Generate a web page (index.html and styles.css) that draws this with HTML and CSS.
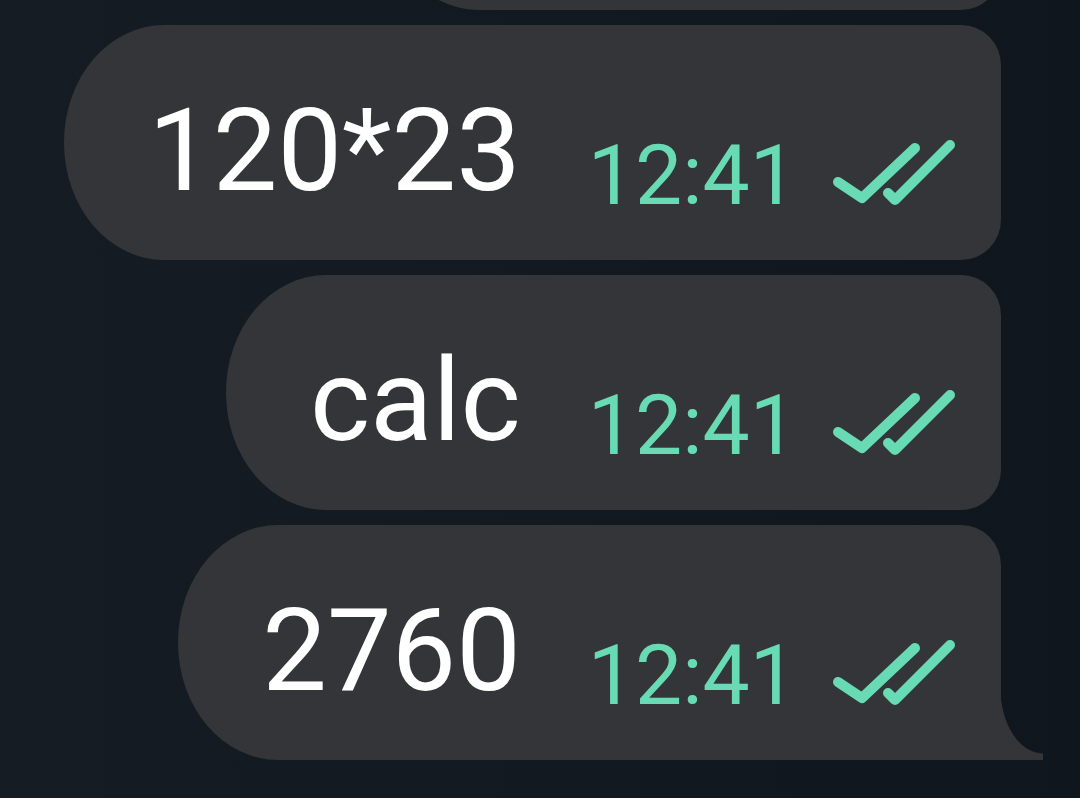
FILE: index.html
```html
<!DOCTYPE html>
<html lang="en">
<head>
<meta charset="utf-8">
<title>Chat</title>
<link rel="stylesheet" href="styles.css">
</head>
<body>
<div class="chat">
  <div class="bubble bubble--clipped"></div>

  <div class="bubble">
    <span class="msg">120*23</span>
    <span class="meta">
      <span class="time">12:41</span>
      <svg class="checks" viewBox="0 0 132 70" aria-hidden="true">
        <polyline points="13,45 37,61 90,11"/>
        <polyline points="63,56 70,63 125,8"/>
      </svg>
    </span>
  </div>

  <div class="bubble">
    <span class="msg">calc</span>
    <span class="meta">
      <span class="time">12:41</span>
      <svg class="checks" viewBox="0 0 132 70" aria-hidden="true">
        <polyline points="13,45 37,61 90,11"/>
        <polyline points="63,56 70,63 125,8"/>
      </svg>
    </span>
  </div>

  <div class="bubble bubble--tail">
    <span class="msg">2760</span>
    <span class="meta">
      <span class="time">12:41</span>
      <svg class="checks" viewBox="0 0 132 70" aria-hidden="true">
        <polyline points="13,45 37,61 90,11"/>
        <polyline points="63,56 70,63 125,8"/>
      </svg>
    </span>
  </div>
</div>
</body>
</html>
```

FILE: styles.css
```css
html, body {
  margin: 0;
  height: 100%;
}

body {
  background: linear-gradient(to right, #151c24 0%, #121920 50%, #0f161d 100%);
  font-family: Roboto, "Noto Sans", sans-serif;
  overflow: hidden;
}

.chat {
  display: flex;
  flex-direction: column;
  align-items: flex-end;
  gap: 15px;
  padding-right: 79px;
}

.bubble {
  position: relative;
  display: flex;
  align-items: flex-end;
  background: #333538;
  border-radius: 100px 40px 40px 100px / 117px 40px 40px 117px;
  padding: 68px 44px 42px 84px;
}

.bubble--clipped {
  width: 622px;
  height: 235px;
  padding: 0;
  margin-top: -225px;
}

.msg {
  font-size: 115px;
  line-height: 1;
  color: #ffffff;
  margin-bottom: 10px;
}

.meta {
  display: flex;
  align-items: flex-end;
  margin-left: 67px;
}

.time {
  font-size: 84px;
  line-height: 1;
  color: #68dab4;
}

.checks {
  width: 132px;
  height: 70px;
  margin-left: 28px;
  margin-bottom: 11px;
  fill: none;
  stroke: #68dab4;
  stroke-width: 10;
  stroke-linecap: round;
  stroke-linejoin: round;
}

.bubble--tail {
  border-bottom-right-radius: 0;
}

.bubble--tail::after {
  content: "";
  position: absolute;
  right: -42px;
  bottom: 0;
  width: 43px;
  height: 72px;
  background: radial-gradient(ellipse 43px 66px at 100% 0, transparent 98%, #333538 100%);
}
```
